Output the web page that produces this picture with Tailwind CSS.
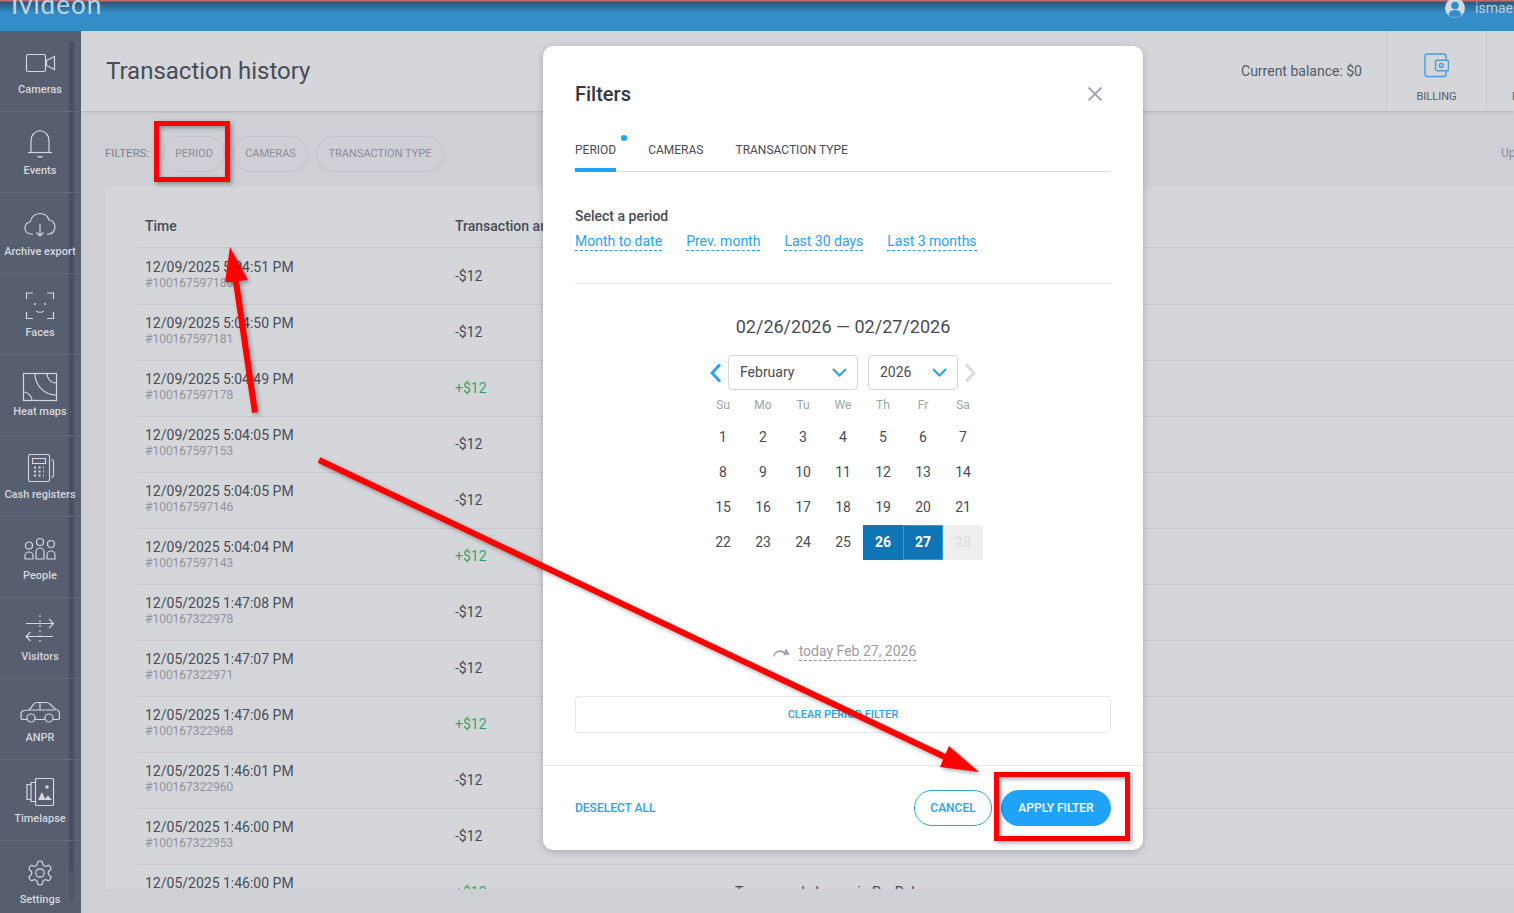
<!DOCTYPE html>
<html lang="en">
<head>
  <meta charset="UTF-8">
  <title>Transaction history</title>
  <script src="https://cdn.jsdelivr.net/npm/@tailwindcss/browser@4"></script>
</head>
<body class="relative h-[913px] overflow-hidden bg-[#cfd0d5] font-['Roboto',sans-serif] text-[#474c57]">

  <!-- Top bar -->
  <header class="flex h-[31px] justify-between overflow-hidden bg-[linear-gradient(to_bottom,#c96a6a_0,#c96a6a_1px,#2c5878_2px,#338dc9_13px)]">
    <div class="-mt-[11px] ml-[11px] font-['Lato',sans-serif] text-[26px] leading-[30px] tracking-[1px] text-[#bcd6e8]">Ivideon</div>
    <div class="-mt-[3px] -mr-[10px] flex h-[22px] items-center gap-[10px] text-[14px] text-[#bccfdd]">
      <svg width="20" height="20" viewBox="0 0 20 20"><circle cx="10" cy="10" r="10" fill="#d3dbe1"/><circle cx="10" cy="7.5" r="3.8" fill="#338dc9"/><path d="M3.5 17 Q4.5 12 10 12 Q15.5 12 16.5 17 Q10 22 3.5 17Z" fill="#338dc9"/></svg>
      <span class="w-[49px] overflow-hidden">ismael</span>
    </div>
  </header>

  <div class="flex h-[882px]">
    <!-- Sidebar -->
    <nav class="relative w-[81px] shrink-0 overflow-hidden bg-[#565e6f] pr-[1px] text-center text-[11px] leading-[22px] font-medium text-[#d5d7dc]">
      <div class="absolute top-[10px] left-[69px] h-[830px] w-[5px] rounded-full bg-[#474f62]"></div>
      <div class="absolute top-[840px] left-[69px] h-[30px] w-[5px] rounded-b-full bg-[#4f5768]"></div>

      <a class="relative block h-[81px] border-b border-[#626a7a] pt-[16px]">
        <svg class="mx-auto" width="40" height="32" viewBox="0 0 40 32" fill="none" stroke="#d5d7dc" stroke-width="1.2"><rect x="6.5" y="7.5" width="19" height="17" rx="1.5"/><path d="M26.5 13.5L34.5 9.5V22.5L26.5 18.5Z"/></svg>
        <div>Cameras</div>
      </a>
      <a class="relative block h-[81px] border-b border-[#626a7a] pt-[16px]">
        <svg class="mx-auto" width="40" height="32" viewBox="0 0 40 32" fill="none" stroke="#d5d7dc" stroke-width="1.2"><path d="M11 24V13C11 7 15 3.5 20 2.5C25 3.500 29 7 29 13V24"/><path d="M8 24.500H32"/><path d="M17.500 28C19 29.500 21 29.500 22.500 28"/></svg>
        <div>Events</div>
      </a>
      <a class="relative block h-[81px] border-b border-[#626a7a] pt-[16px] whitespace-nowrap">
        <svg class="mx-auto" width="40" height="32" viewBox="0 0 40 32" fill="none" stroke="#d5d7dc" stroke-width="1.2"><path d="M13 25H11C7 25 5 22 5 19C5 16 7 13.500 10 13C11 8 15 4.500 20 4.500C25 4.500 28 8 29 11C33 11 35 15 35 18C35 22 32 25 29 25H27"/><path d="M20 15V27M16.500 23.500L20 27L23.500 23.500"/></svg>
        <div class="-mx-2">Archive export</div>
      </a>
      <a class="relative block h-[81px] border-b border-[#626a7a] pt-[16px]">
        <svg class="mx-auto" width="40" height="32" viewBox="0 0 40 32" fill="none" stroke="#d5d7dc" stroke-width="1.2"><path d="M6.500 9V3H13M27 3H33.500V9M6.500 22V28.500H13M27 28.500H33.500V22"/><circle cx="15" cy="14" r="1" fill="#d5d7dc" stroke="none"/><circle cx="25" cy="14" r="1" fill="#d5d7dc" stroke="none"/><path d="M16 21.500Q20 23 24 21.500"/></svg>
        <div>Faces</div>
      </a>
      <a class="relative block h-[81px] border-b border-[#626a7a] pt-[16px]">
        <svg class="mx-auto" width="40" height="32" viewBox="0 0 40 32" fill="none" stroke="#d5d7dc" stroke-width="1.2"><rect x="3.500" y="2.500" width="33" height="27"/><path d="M15 2.500C15 14 24 24 36.500 24M27 2.500C27 8 31 12 36.500 12M3.500 21C8 21 12 25 12 29.500"/></svg>
        <div class="-mt-[2px]">Heat maps</div>
      </a>
      <a class="relative block h-[81px] border-b border-[#626a7a] pt-[16px] whitespace-nowrap">
        <svg class="mx-auto" width="40" height="32" viewBox="0 0 40 32" fill="none" stroke="#d5d7dc" stroke-width="1.100"><rect x="8.500" y="2.500" width="21" height="27" rx="1.500"/><rect x="12.500" y="6.500" width="13" height="5"/><path d="M14 15.500H24M14 19.500H24M14 23.500H24" stroke-width="2" stroke-dasharray="2 2.500"/><path d="M31 8H32Q33.500 8 33.500 9.500V23.500Q33.500 25 32 25H31"/></svg>
        <div class="-mx-2">Cash registers</div>
      </a>
      <a class="relative block h-[81px] border-b border-[#626a7a] pt-[16px]">
        <svg class="mx-auto" width="40" height="32" viewBox="0 0 40 32" fill="none" stroke="#d5d7dc" stroke-width="1.200"><circle cx="9" cy="12.500" r="3.500"/><circle cx="20" cy="9" r="3.500"/><circle cx="31" cy="11" r="3.500"/><path d="M5 26V23A4 4 0 0 1 13 23V26ZM16 26V19A4 4 0 0 1 24 19V26ZM27 26V22A4 4 0 0 1 35 22V26Z"/></svg>
        <div>People</div>
      </a>
      <a class="relative block h-[81px] border-b border-[#626a7a] pt-[16px]">
        <svg class="mx-auto" width="40" height="32" viewBox="0 0 40 32" fill="none" stroke="#d5d7dc" stroke-width="1.200"><path d="M20 1V31" stroke-dasharray="2 3"/><path d="M6 9.500H33M29 5L33.500 9.500L29 14M33 22.500H6M10.500 18L6 22.500L10.500 27"/></svg>
        <div>Visitors</div>
      </a>
      <a class="relative block h-[81px] border-b border-[#626a7a] pt-[16px]">
        <svg class="mx-auto" width="40" height="32" viewBox="0 0 40 32" fill="none" stroke="#d5d7dc" stroke-width="1.200"><path d="M7 24.500H3Q1 24.500 1 22.500V19Q1 16 4 15.500L9 15L14 9Q15 7.500 17 7.500H26Q28 7.500 30 9L35 14Q39.500 15 39.500 19V22.500Q39.500 24.500 37.500 24.500H33M25 24.500H15M20 7.500V15M9 15H35"/><circle cx="11" cy="23" r="4"/><circle cx="29" cy="23" r="4"/></svg>
        <div>ANPR</div>
      </a>
      <a class="relative block h-[81px] border-b border-[#626a7a] pt-[16px]">
        <svg class="mx-auto" width="40" height="32" viewBox="0 0 40 32" fill="none" stroke="#d5d7dc" stroke-width="1.200"><rect x="15.500" y="2.500" width="18" height="27" rx="1"/><path d="M15 6.500H11V25.500H15M11 8.500H7V23.500H11"/><circle cx="27" cy="11" r="1.800" fill="#d5d7dc" stroke="none"/><path d="M18 24L22 16L25.500 24ZM24 24L28 19.500L32 24Z" fill="#d5d7dc" stroke="none"/></svg>
        <div>Timelapse</div>
      </a>
      <a class="relative block h-[81px] pt-[16px]">
        <svg class="mx-auto" width="40" height="32" viewBox="0 0 40 32" fill="none" stroke="#d5d7dc" stroke-width="1"><g transform="translate(5.600 1.600) scale(1.200)"><path d="M12.220 2h-.44a2 2 0 0 0-2 2v.18a2 2 0 0 1-1 1.730l-.43.25a2 2 0 0 1-2 0l-.15-.08a2 2 0 0 0-2.730.73l-.22.38a2 2 0 0 0 .73 2.730l.15.1a2 2 0 0 1 1 1.720v.51a2 2 0 0 1-1 1.740l-.15.09a2 2 0 0 0-.73 2.730l.22.38a2 2 0 0 0 2.730.73l.15-.08a2 2 0 0 1 2 0l.43.25a2 2 0 0 1 1 1.730V20a2 2 0 0 0 2 2h.44a2 2 0 0 0 2-2v-.18a2 2 0 0 1 1-1.730l.43-.25a2 2 0 0 1 2 0l.15.08a2 2 0 0 0 2.730-.73l.22-.39a2 2 0 0 0-.73-2.730l-.15-.08a2 2 0 0 1-1-1.740v-.5a2 2 0 0 1 1-1.740l.15-.09a2 2 0 0 0 .73-2.730l-.22-.38a2 2 0 0 0-2.730-.73l-.15.08a2 2 0 0 1-2 0l-.43-.25a2 2 0 0 1-1-1.730V4a2 2 0 0 0-2-2z"/><circle cx="12" cy="12" r="3.500"/></g></svg>
        <div>Settings</div>
      </a>
    </nav>

    <!-- Main -->
    <main class="flex min-w-0 flex-1 flex-col">
      <div class="flex h-[80px] shrink-0 items-center justify-between bg-[#d5d6da] pl-[25px] shadow-[0_1px_3px_rgba(0,0,0,0.15)]">
        <h1 class="text-[24px] text-[#474c57]">Transaction history</h1>
        <div class="flex h-full items-center">
          <span class="mr-[24px] text-[14px] text-[#555a65]">Current balance: $0</span>
          <div class="flex h-full w-[100px] flex-col items-center border-l border-[#c8cad0] pt-[22px] text-[11px] text-[#555a65]">
            <svg width="25" height="25" viewBox="0 0 26 26" fill="none" stroke="#4a9fdb" stroke-width="1.500"><path d="M23 7V3.500Q23 1 21 1H3Q1 1 1 3V22Q1 24.500 3 24.500H21Q23 24.500 23 22V18.500"/><rect x="12" y="7.500" width="13.500" height="11" rx="1.500"/><circle cx="18" cy="13" r="2"/></svg>
            <span class="mt-[11px]">BILLING</span>
          </div>
          <div class="h-full w-[28px] overflow-hidden border-l border-[#c8cad0] pt-[58px] pl-[25px] text-[11px] text-[#555a65]">P</div>
        </div>
      </div>

      <div class="relative flex h-[76px] shrink-0 items-center gap-[8px] pt-[10px] pl-[24px] text-[11px] text-[#8a8d96]">
        <span class="w-[50px] text-[11.500px] text-[#7d808a]">FILTERS:</span>
        <span class="flex h-[36px] w-[62px] items-center justify-center rounded-full border border-[#bfc1c8]">PERIOD</span>
        <span class="flex h-[36px] w-[75px] items-center justify-center rounded-full border border-[#bfc1c8]">CAMERAS</span>
        <span class="flex h-[36px] w-[128px] items-center justify-center rounded-full border border-[#bfc1c8]">TRANSACTION TYPE</span>
        <span class="absolute top-[33px] left-[1420px] text-[12px]">Up</span>
      </div>

      <!-- Table -->
      <section class="ml-[24px] h-[702px] shrink-0 overflow-hidden bg-[#d5d6da] pl-[32px] text-[14px]">
        <div class="flex h-[61px] items-end border-b border-[#c6c8cf] pb-[10px] pl-[8px] font-medium text-[#474c57]">
          <span class="w-[310px]">Time</span><span>Transaction amount</span>
        </div>
        <div class="flex h-[57px] border-b border-[#c6c8cf] pt-[9px] pl-[8px]"><div class="w-[310px] leading-[20px]">12/09/2025 5:04:51 PM<div class="-mt-[2px] text-[12px] leading-[16px] text-[#8f929b]">#100167597186</div></div><div class="pt-[9px]">-$12</div></div>
        <div class="flex h-[56px] border-b border-[#c6c8cf] pt-[8px] pl-[8px]"><div class="w-[310px] leading-[20px]">12/09/2025 5:04:50 PM<div class="-mt-[2px] text-[12px] leading-[16px] text-[#8f929b]">#100167597181</div></div><div class="pt-[9px]">-$12</div></div>
        <div class="flex h-[56px] border-b border-[#c6c8cf] pt-[8px] pl-[8px]"><div class="w-[310px] leading-[20px]">12/09/2025 5:04:49 PM<div class="-mt-[2px] text-[12px] leading-[16px] text-[#8f929b]">#100167597178</div></div><div class="pt-[9px] text-[#2aa86a]">+$12</div></div>
        <div class="flex h-[56px] border-b border-[#c6c8cf] pt-[8px] pl-[8px]"><div class="w-[310px] leading-[20px]">12/09/2025 5:04:05 PM<div class="-mt-[2px] text-[12px] leading-[16px] text-[#8f929b]">#100167597153</div></div><div class="pt-[9px]">-$12</div></div>
        <div class="flex h-[56px] border-b border-[#c6c8cf] pt-[8px] pl-[8px]"><div class="w-[310px] leading-[20px]">12/09/2025 5:04:05 PM<div class="-mt-[2px] text-[12px] leading-[16px] text-[#8f929b]">#100167597146</div></div><div class="pt-[9px]">-$12</div></div>
        <div class="flex h-[56px] border-b border-[#c6c8cf] pt-[8px] pl-[8px]"><div class="w-[310px] leading-[20px]">12/09/2025 5:04:04 PM<div class="-mt-[2px] text-[12px] leading-[16px] text-[#8f929b]">#100167597143</div></div><div class="pt-[9px] text-[#2aa86a]">+$12</div></div>
        <div class="flex h-[56px] border-b border-[#c6c8cf] pt-[8px] pl-[8px]"><div class="w-[310px] leading-[20px]">12/05/2025 1:47:08 PM<div class="-mt-[2px] text-[12px] leading-[16px] text-[#8f929b]">#100167322978</div></div><div class="pt-[9px]">-$12</div></div>
        <div class="flex h-[56px] border-b border-[#c6c8cf] pt-[8px] pl-[8px]"><div class="w-[310px] leading-[20px]">12/05/2025 1:47:07 PM<div class="-mt-[2px] text-[12px] leading-[16px] text-[#8f929b]">#100167322971</div></div><div class="pt-[9px]">-$12</div></div>
        <div class="flex h-[56px] border-b border-[#c6c8cf] pt-[8px] pl-[8px]"><div class="w-[310px] leading-[20px]">12/05/2025 1:47:06 PM<div class="-mt-[2px] text-[12px] leading-[16px] text-[#8f929b]">#100167322968</div></div><div class="pt-[9px] text-[#2aa86a]">+$12</div></div>
        <div class="flex h-[56px] border-b border-[#c6c8cf] pt-[8px] pl-[8px]"><div class="w-[310px] leading-[20px]">12/05/2025 1:46:01 PM<div class="-mt-[2px] text-[12px] leading-[16px] text-[#8f929b]">#100167322960</div></div><div class="pt-[9px]">-$12</div></div>
        <div class="flex h-[56px] border-b border-[#c6c8cf] pt-[8px] pl-[8px]"><div class="w-[310px] leading-[20px]">12/05/2025 1:46:00 PM<div class="-mt-[2px] text-[12px] leading-[16px] text-[#8f929b]">#100167322953</div></div><div class="pt-[9px]">-$12</div></div>
        <div class="flex h-[56px] pt-[8px] pl-[8px]"><div class="w-[310px] leading-[20px]">12/05/2025 1:46:00 PM</div><div class="w-[280px] pt-[9px] text-[#2aa86a]">+$12</div><div class="pt-[9px]">Top-up and change in PayPal</div></div>
      </section>
    </main>
  </div>

  <!-- Filters modal -->
  <div class="absolute top-[46px] left-[543px] flex h-[804px] w-[600px] flex-col rounded-[10px] bg-white shadow-[0_2px_8px_rgba(0,0,0,0.2)]">
    <div class="flex-1 px-[32px]">
      <div class="flex h-[96px] items-start justify-between pt-[34px]">
        <h2 class="text-[20px] leading-[28px] font-medium text-[#33363f]">Filters</h2>
        <svg class="mt-[6px] mr-[8px]" width="16" height="16" viewBox="0 0 16 16" fill="none" stroke="#a3a6ae" stroke-width="1.800"><path d="M1.500 1.500L14.500 14.500M14.500 1.500L1.500 14.500"/></svg>
      </div>

      <div class="relative flex h-[30px] gap-[32px] border-b border-[#d9dbe0] text-[12px] leading-[16px] text-[#474c57]">
        <span class="relative h-[30px] border-b-[4px] border-[#1fa3f8] pt-0 -mb-[1px]">PERIOD<i class="absolute -top-[7px] -right-[11px] h-[6px] w-[6px] rounded-full bg-[#1fa3f8]"></i></span>
        <span>CAMERAS</span>
        <span>TRANSACTION TYPE</span>
      </div>

      <div class="mt-[34px] h-[78px] border-b border-[#e5e6ea]">
        <div class="text-[14px] leading-[20px] font-medium text-[#474c57]">Select a period</div>
        <div class="mt-[6px] flex gap-[24px] text-[14px] leading-[18px] text-[#27a3f5]">
          <a class="border-b border-dashed border-[#27a3f5]">Month to date</a>
          <a class="border-b border-dashed border-[#27a3f5]">Prev. month</a>
          <a class="border-b border-dashed border-[#27a3f5]">Last 30 days</a>
          <a class="border-b border-dashed border-[#27a3f5]">Last 3 months</a>
        </div>
      </div>

      <div class="mt-[30px] text-center text-[18px] leading-[26px] text-[#474c57]">02/26/2026 — 02/27/2026</div>

      <div class="mt-[15px] flex h-[35px] items-center pl-[134px] text-[14px] text-[#474c57]">
        <svg class="mr-[6px]" width="13" height="20" viewBox="0 0 13 20" fill="none" stroke="#1fa3f8" stroke-width="2.800"><path d="M11 1.500L3 10L11 18.500"/></svg>
        <div class="flex h-[35px] w-[130px] items-center justify-between rounded-[4px] border border-[#d4d6dc] pr-[10px] pl-[11px]">February<svg width="15" height="9" viewBox="0 0 15 9" fill="none" stroke="#1fa3f8" stroke-width="2"><path d="M1 1L7.500 7.500L14 1"/></svg></div>
        <div class="ml-[10px] flex h-[35px] w-[90px] items-center justify-between rounded-[4px] border border-[#d4d6dc] pr-[10px] pl-[11px]">2026<svg width="15" height="9" viewBox="0 0 15 9" fill="none" stroke="#1fa3f8" stroke-width="2"><path d="M1 1L7.500 7.500L14 1"/></svg></div>
        <svg class="ml-[6px]" width="13" height="20" viewBox="0 0 13 20" fill="none" stroke="#d8dade" stroke-width="2.800"><path d="M2 1.500L10 10L2 18.500"/></svg>
      </div>

      <div class="ml-[128px] grid w-[280px] grid-cols-7 text-center text-[14px] leading-[35px] text-[#474c57]">
        <span class="h-[30px] text-[12px] leading-[30px] text-[#9aa5a5]">Su</span><span class="h-[30px] text-[12px] leading-[30px] text-[#9aa5a5]">Mo</span><span class="h-[30px] text-[12px] leading-[30px] text-[#9aa5a5]">Tu</span><span class="h-[30px] text-[12px] leading-[30px] text-[#9aa5a5]">We</span><span class="h-[30px] text-[12px] leading-[30px] text-[#9aa5a5]">Th</span><span class="h-[30px] text-[12px] leading-[30px] text-[#9aa5a5]">Fr</span><span class="h-[30px] text-[12px] leading-[30px] text-[#9aa5a5]">Sa</span>
        <span>1</span><span>2</span><span>3</span><span>4</span><span>5</span><span>6</span><span>7</span>
        <span>8</span><span>9</span><span>10</span><span>11</span><span>12</span><span>13</span><span>14</span>
        <span>15</span><span>16</span><span>17</span><span>18</span><span>19</span><span>20</span><span>21</span>
        <span>22</span><span>23</span><span>24</span><span>25</span>
        <span class="bg-[#0f75b5] font-bold text-white">26</span>
        <span class="border border-[#22a0f0] bg-[#0f75b5] leading-[33px] font-bold text-white">27</span>
        <span class="bg-[#eef0f0] font-bold text-[#dfe1e3]">28</span>
      </div>

      <div class="mt-[82px] flex items-center justify-center pl-[3px] text-[14px] leading-[18px] text-[#9a9ca5]">
        <svg class="mr-[9px]" width="17" height="10" viewBox="0 0 17 10" fill="#a5a7ae"><path d="M0 9.500C1 4.500 5 2.500 9 3.500L11.500 4.500L13 1.500L17 7.500L10 8.500L11 6.500L8.500 5.500C5 4.500 2.500 6 1 9.500Z"/></svg>
        <span class="border-b border-dashed border-[#8f919a]">today Feb 27, 2026</span>
      </div>

      <button class="mt-[35px] block h-[37px] w-full rounded-[4px] border border-[#e5e6ea] pt-[1px] text-[11px] font-medium text-[#27a3f5]">CLEAR PERIOD FILTER</button>
    </div>

    <div class="flex h-[85px] shrink-0 items-center justify-between border-t border-[#e5e6ea] px-[32px] text-[12px] font-medium">
      <a class="text-[#27a3f5]">DESELECT ALL</a>
      <div class="flex gap-[9px]">
        <button class="h-[36px] w-[78px] rounded-full border border-[#27a3f5] text-[#27a3f5]">CANCEL</button>
        <button class="h-[36px] w-[110px] rounded-full bg-[#1fa3f8] text-white">APPLY FILTER</button>
      </div>
    </div>
  </div>

  <!-- Red annotations drawn over the screenshot -->
  <svg class="pointer-events-none absolute top-0 left-0 drop-shadow-[2px_2px_2px_rgba(0,0,0,0.35)]" width="1514" height="913" fill="none">
    <rect x="156.500" y="123.500" width="71" height="56" stroke="#ff0000" stroke-width="5"/>
    <rect x="996.500" y="774.500" width="131" height="64" stroke="#ff0000" stroke-width="5"/>
    <path d="M230 247L248 280L239 281L258 412L252 413L233 282L225 282Z" fill="#ff0000"/>
    <path d="M319 460L945 757" stroke="#ff0000" stroke-width="6"/>
    <path d="M979 772L949 746L940 767Z" fill="#ff0000"/>
  </svg>
</body>
</html>
